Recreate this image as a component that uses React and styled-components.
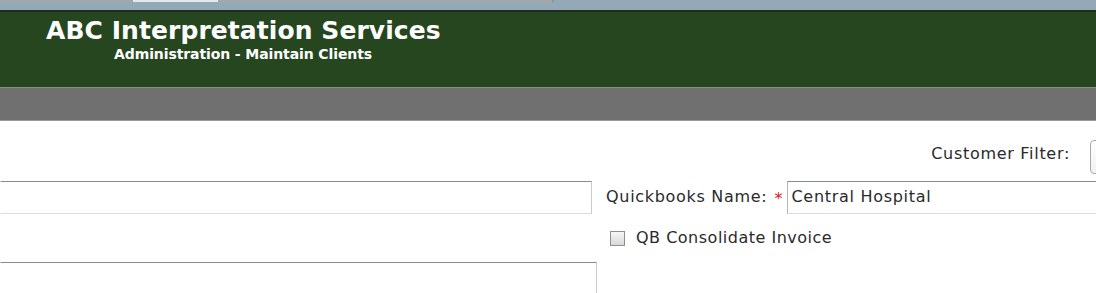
import styled, { createGlobalStyle } from 'styled-components';

const GlobalStyle = createGlobalStyle`
  html, body {
    margin: 0;
    padding: 0;
    background: #fff;
    overflow: hidden;
  }
  body {
    font-family: "DejaVu Sans", Verdana, sans-serif;
  }
`;

const Page = styled('div')`
  width: 1210px;
`;

const TabStrip = styled('div')`
  background-color: #93a9b5;
  border-bottom: 2px solid #232823;
  display: flex;
  height: 10px;
  align-items: flex-start;
`;

const TabEdge = styled('div')`
  background-color: ${({ $active }) => ($active ? '#e4e8ea' : '#a1a6a9')};
  border-right: ${({ $end }) => ($end ? '2px solid #8e9498' : 'none')};
  height: 2px;
  width: ${({ $width }) => $width}px;
`;

const Header = styled('div')`
  background-color: #26461f;
  border-bottom: 1px solid #8a8f88;
  box-sizing: border-box;
  color: #fff;
  height: 76px;
  padding: 4px 0 0 46px;
`;

const Title = styled('h1')`
  font-size: 25px;
  font-weight: bold;
  letter-spacing: 0.07px;
  line-height: 30px;
  margin: 0;
`;

const Subtitle = styled('h2')`
  font-size: 14px;
  font-weight: bold;
  letter-spacing: -0.1px;
  line-height: 16px;
  margin: 0 0 0 68px;
`;

const Toolbar = styled('div')`
  background-color: #707070;
  border-bottom: 1px solid #9b9b9b;
  height: 32px;
`;

const Content = styled('div')`
  color: #2a2a2a;
  display: flex;
  flex-direction: column;
  font-size: 16px;
  letter-spacing: 0.7px;
  padding-top: 19px;
`;

const FilterRow = styled('div')`
  align-items: center;
  display: flex;
  gap: 20px;
  height: 34px;
  justify-content: flex-end;
`;

const FilterLabel = styled('span')`
  padding-bottom: 7px;
  white-space: nowrap;
`;

const Select = styled('div')`
  background: linear-gradient(#ffffff, #f1f1f1);
  border: 1px solid #a9a9a9;
  border-radius: 4px;
  box-sizing: border-box;
  height: 34px;
  width: 120px;
`;

const Row = styled('div')`
  align-items: center;
  display: flex;
  height: ${({ $height }) => $height}px;
  margin-top: ${({ $top }) => $top || 0}px;
  padding-left: ${({ $indent }) => $indent || 0}px;
`;

const TextInput = styled('div')`
  border-color: #8c8c8c #cccccc #dcdcdc transparent;
  border-style: solid;
  border-width: 1px;
  box-sizing: border-box;
  height: ${({ $open }) => ($open ? '40px' : '33px')};
  line-height: 29px;
  padding-left: 3px;
  width: ${({ $width }) => ($width ? `${$width}px` : 'auto')};
  flex: ${({ $width }) => ($width ? 'none' : '1')};
  align-self: flex-start;
`;

const FieldInput = styled(TextInput)`
  border-left-color: #b5b5b5;
`;

const Label = styled('span')`
  white-space: nowrap;
  margin-left: ${({ $left }) => $left || 0}px;
  padding-bottom: ${({ $lift }) => $lift || 0}px;
  letter-spacing: ${({ $tight }) => ($tight ? '0.5px' : 'inherit')};
`;

const Required = styled('span')`
  color: #d42020;
  letter-spacing: 0;
  margin: 2px 5px 0 7px;
`;

const Check = styled('span')`
  background: linear-gradient(#f6f6f6, #d9d9d9);
  border: 1px solid #8f8f8f;
  box-sizing: border-box;
  display: inline-block;
  height: 15px;
  margin-right: 11px;
  width: 15px;
`;

export default function App() {
  return (
    <Page>
      <GlobalStyle />
      <TabStrip>
        <TabEdge $width={133} />
        <TabEdge $width={85} $active />
        <TabEdge $width={334} $end />
      </TabStrip>
      <Header>
        <Title>ABC Interpretation Services</Title>
        <Subtitle>Administration - Maintain Clients</Subtitle>
      </Header>
      <Toolbar />
      <Content>
        <FilterRow>
          <FilterLabel>Customer Filter:</FilterLabel>
          <Select />
        </FilterRow>
        <Row $height={33} $top={7}>
          <TextInput $width={592} />
          <Label $left={14} $lift={2}>Quickbooks Name:</Label>
          <Required>*</Required>
          <FieldInput>Central Hospital</FieldInput>
        </Row>
        <Row $height={48} $indent={610}>
          <Check />
          <Label $tight $lift={2}>QB Consolidate Invoice</Label>
        </Row>
        <Row $height={40}>
          <TextInput $width={597} $open />
        </Row>
      </Content>
    </Page>
  );
}
